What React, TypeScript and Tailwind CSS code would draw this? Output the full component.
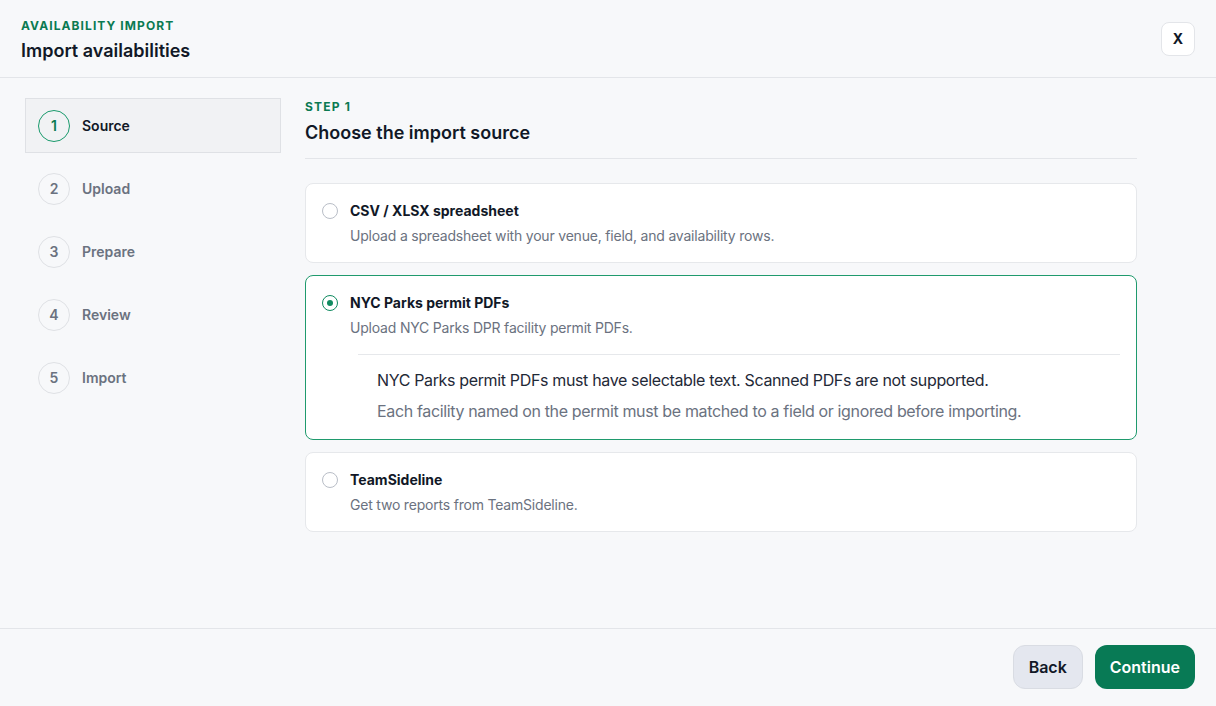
const steps = [
  { n: 1, label: "Source" },
  { n: 2, label: "Upload" },
  { n: 3, label: "Prepare" },
  { n: 4, label: "Review" },
  { n: 5, label: "Import" },
];

function Radio({ checked }: { checked?: boolean }) {
  return (
    <span
      className={
        "mt-[2px] flex h-4 w-4 shrink-0 items-center justify-center rounded-full border bg-white " +
        (checked ? "border-[#0f8a5f] border-[1.5px]" : "border-[#b9bec7]")
      }
    >
      {checked && <span className="h-[6px] w-[6px] rounded-full bg-[#0f8a5f]" />}
    </span>
  );
}

export default function App() {
  return (
    <div
      className="flex h-screen flex-col bg-[#f7f8fa] text-[#111827]"
      style={{ fontFamily: "Inter, 'Noto Sans', sans-serif" }}
    >
      <header className="flex items-start justify-between border-b border-[#e3e5e9] px-[21px] pb-[12px] pt-[18px]">
        <div>
          <div className="text-xs font-bold uppercase leading-4 tracking-[0.09em] text-[#0b7a52]">
            Availability import
          </div>
          <h1 className="mt-[3px] text-lg font-semibold leading-7">Import availabilities</h1>
        </div>
        <button className="mt-[4px] flex h-[34px] w-[34px] items-center justify-center rounded-lg border border-[#e3e5e9] bg-white text-sm font-bold">
          X
        </button>
      </header>

      <div className="flex flex-1 gap-6 pl-[25px] pt-5">
        <nav className="flex w-64 flex-col gap-2">
          {steps.map((s) => {
            const active = s.n === 1;
            return (
              <div
                key={s.n}
                className={
                  "flex h-[55px] items-center gap-3 border px-3 " +
                  (active ? "border-[#dfe1e5] bg-[#f1f2f4]" : "border-transparent")
                }
              >
                <span
                  className={
                    "flex h-8 w-8 items-center justify-center rounded-full border text-sm font-semibold " +
                    (active ? "border-[#1a9a6c] text-[#0b7a52]" : "border-[#dfe1e5] text-[#6b7280]")
                  }
                >
                  {s.n}
                </span>
                <span className={"text-sm font-semibold " + (active ? "text-[#111827]" : "text-[#6b7280]")}>
                  {s.label}
                </span>
              </div>
            );
          })}
        </nav>

        <main className="w-[832px] pt-px">
          <div className="border-b border-[#e3e5e9] pb-[11px]">
            <div className="text-xs font-bold uppercase leading-4 tracking-[0.1em] text-[#0b7a52]">Step 1</div>
            <h2 className="mt-1 text-lg font-semibold leading-7">Choose the import source</h2>
          </div>

          <div className="mt-6 flex flex-col gap-3">
            <div className="flex gap-3 rounded-lg border border-[#e6e8eb] bg-white px-4 pb-4 pt-[17px]">
              <Radio />
              <div>
                <div className="text-sm font-bold leading-5">CSV / XLSX spreadsheet</div>
                <div className="mt-[5px] text-sm leading-5 tracking-[-0.2px] text-[#6b7280]">
                  Upload a spreadsheet with your venue, field, and availability rows.
                </div>
              </div>
            </div>

            <div className="flex gap-3 rounded-lg border border-[#1f9a6d] bg-white pb-4 pl-4 pr-4 pt-[17px]">
              <Radio checked />
              <div className="flex-1">
                <div className="text-sm font-bold leading-5">NYC Parks permit PDFs</div>
                <div className="mt-[5px] text-sm leading-5 tracking-[-0.2px] text-[#6b7280]">
                  Upload NYC Parks DPR facility permit PDFs.
                </div>
                <div className="ml-2 mt-4 border-t border-[#e6e8eb] pl-[19px] pt-[13px]">
                  <p className="text-base leading-6 tracking-[-0.35px] text-[#1f2937]">
                    NYC Parks permit PDFs must have selectable text. Scanned PDFs are not supported.
                  </p>
                  <p className="mt-[7px] text-base leading-6 tracking-[-0.35px] text-[#6b7280]">
                    Each facility named on the permit must be matched to a field or ignored before importing.
                  </p>
                </div>
              </div>
            </div>

            <div className="flex gap-3 rounded-lg border border-[#e6e8eb] bg-white px-4 pb-4 pt-[17px]">
              <Radio />
              <div>
                <div className="text-sm font-bold leading-5">TeamSideline</div>
                <div className="mt-[5px] text-sm leading-5 tracking-[-0.2px] text-[#6b7280]">
                  Get two reports from TeamSideline.
                </div>
              </div>
            </div>
          </div>
        </main>
      </div>

      <footer className="flex justify-end gap-3 border-t border-[#e3e5e9] px-[21px] pb-[17px] pt-4">
        <button className="h-11 rounded-xl border border-[#d9dce3] bg-[#e4e7ef] px-[15px] text-base font-semibold">
          Back
        </button>
        <button className="h-11 rounded-xl bg-[#087a55] px-[15px] text-base font-semibold text-white">
          Continue
        </button>
      </footer>
    </div>
  );
}
